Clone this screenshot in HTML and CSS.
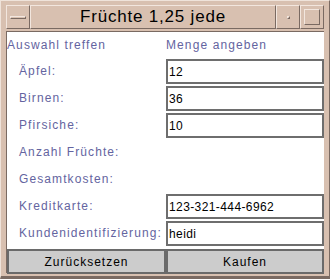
FILE: index.html
```html
<!DOCTYPE html>
<html lang="de">
<head>
  <meta charset="UTF-8">
  <title>Früchte 1,25 jede</title>
  <link rel="stylesheet" href="styles.css">
</head>
<body>
  <div class="window">
    <div class="titlebar">
      <div class="tbtn menu"><span class="bar"></span></div>
      <div class="title">Früchte 1,25 jede</div>
      <div class="tbtn mini"><span class="dot"></span></div>
      <div class="tbtn maxi"><span class="box"></span></div>
    </div>
    <form class="content">
      <div class="head">Auswahl treffen</div>
      <div class="head">Menge angeben</div>

      <label class="lbl" for="apfel">Äpfel:</label>
      <input class="field" id="apfel" type="text" value="12">

      <label class="lbl" for="birnen">Birnen:</label>
      <input class="field" id="birnen" type="text" value="36">

      <label class="lbl" for="pfirsich">Pfirsiche:</label>
      <input class="field" id="pfirsich" type="text" value="10">

      <div class="lbl">Anzahl Früchte:</div>
      <div class="out"></div>

      <div class="lbl">Gesamtkosten:</div>
      <div class="out"></div>

      <label class="lbl" for="karte">Kreditkarte:</label>
      <input class="field" id="karte" type="text" value="123-321-444-6962">

      <label class="lbl" for="kunde">Kundenidentifizierung:</label>
      <input class="field" id="kunde" type="text" value="heidi">

      <button class="btn" type="reset">Zurücksetzen</button>
      <button class="btn" type="submit">Kaufen</button>
    </form>
  </div>
</body>
</html>
```

FILE: styles.css
```css
body { margin: 0; background: #d8c0b0; font-family: "Liberation Sans", Arial, sans-serif; }
.window { width: 330px; height: 279px; box-sizing: border-box; background: #d8c0b0; padding: 4px 5px 3px 5px; display: flex; flex-direction: column; gap: 2px; border-top: 1px solid #efe3da; border-left: 1px solid #efe3da; border-right: 1px solid #7a6a62; border-bottom: 3px solid #7a6a62; }

.titlebar { display: flex; height: 24px; background: #d8c0b0; }
.tbtn { width: 24px; height: 24px; box-sizing: border-box; border: 1px solid; border-color: #f2e6de #7a6a62 #7a6a62 #f2e6de; display: flex; align-items: center; justify-content: center; }
.title { flex: 1; box-sizing: border-box; border: 1px solid; border-color: #f2e6de #7a6a62 #7a6a62 #f2e6de; text-align: center; font-size: 17px; line-height: 22px; letter-spacing: 0.8px; color: #000; }
.bar { width: 16px; height: 3px; box-sizing: border-box; border: 1px solid; border-color: #f2e6de #7a6a62 #7a6a62 #f2e6de; }
.dot { width: 3px; height: 3px; box-sizing: border-box; border: 1px solid; border-color: #f2e6de #7a6a62 #7a6a62 #f2e6de; }
.box { width: 16px; height: 16px; box-sizing: border-box; border: 1px solid; border-color: #f2e6de #7a6a62 #7a6a62 #f2e6de; }

.content { flex: 1; margin: 0; background: #fff; border-left: 1px solid #7a6a62; border-top: 1px solid #7a6a62; display: grid; grid-template-columns: 159px 158px; grid-template-rows: repeat(9, 25px); row-gap: 2px; align-content: start; padding-right: 1px; }

.head { font-size: 12px; letter-spacing: 1.1px; color: #6464a0; align-self: end; line-height: 23px; }
.lbl { font-size: 12px; letter-spacing: 1.1px; color: #6464a0; line-height: 25px; padding-left: 12px; white-space: nowrap; }
.field { box-sizing: border-box; width: 100%; height: 25px; margin: 0; border: 2px solid #6e6e6e; padding: 0 1px; font-family: "Liberation Sans", Arial, sans-serif; font-size: 12px; letter-spacing: 0.4px; color: #000; background: #fff; outline: none; }
.btn { box-sizing: border-box; height: 25px; margin: 1px 0 0 0; border: 2px solid #6a6a6a; background: #cccccc; font-family: "Liberation Sans", Arial, sans-serif; font-size: 12px; letter-spacing: 1px; color: #000; padding: 0; }
```
